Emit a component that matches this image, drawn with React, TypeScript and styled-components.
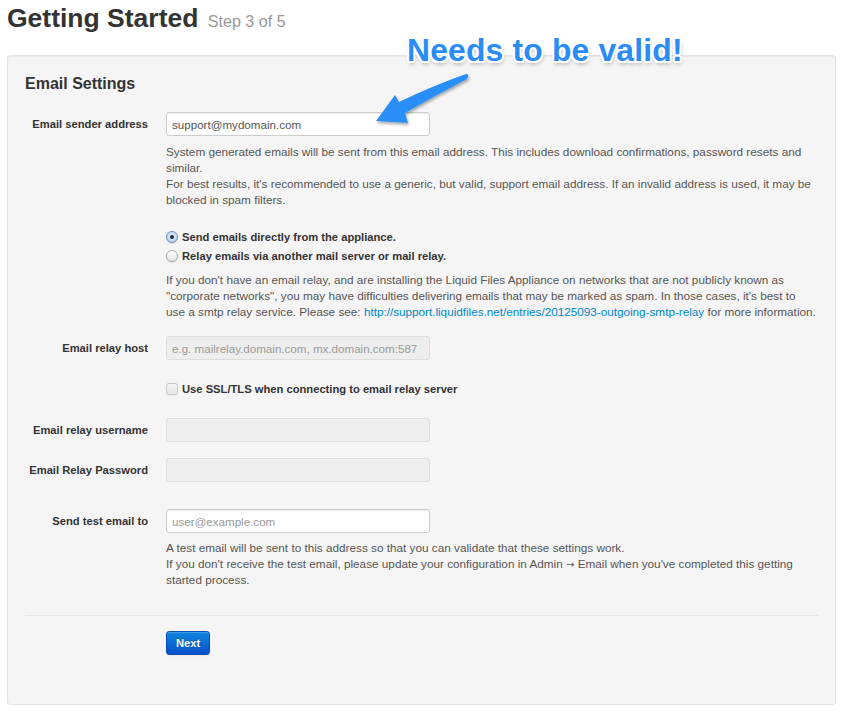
import React from "react";
import styled, { createGlobalStyle } from "styled-components";

const Global = createGlobalStyle`
  html, body { margin: 0; padding: 0; background: #ffffff; }
  body { font-family: "Liberation Sans", Arial, Helvetica, sans-serif; color: #333333; font-size: 11.2px; }
  * { box-sizing: border-box; }
`;

const Page = styled.div`
  position: relative;
  width: 850px;
  height: 715px;
  padding: 3px 14px 0 7px;
  overflow: hidden;
`;

const Title = styled.h1`
  margin: 0 0 22px 0;
  height: 30px;
  font-size: 26.5px;
  line-height: 30px;
  font-weight: 700;
  color: #333333;
  white-space: nowrap;
`;

const Small = styled.small`
  font-size: 16.1px;
  line-height: 1;
  font-weight: 400;
  color: #999999;
  margin-left: 2px;
`;

const Well = styled.div`
  background: #f5f5f5;
  border: 1px solid #e3e3e3;
  border-radius: 3px;
  box-shadow: inset 0 1px 1px rgba(0, 0, 0, 0.05);
  padding: 18px 17px 18px 17px;
  height: 650px;
`;

const Legend = styled.h3`
  margin: 0 0 18px 0;
  font-size: 16px;
  line-height: 20px;
  font-weight: 700;
  color: #333333;
`;

const Group = styled.div<{ $padTop?: number; $padBottom?: number }>`
  display: grid;
  grid-template-columns: 123px 1fr;
  column-gap: 18px;
  margin-bottom: 16px;
  padding-top: ${(p) => p.$padTop ?? 0}px;
  padding-bottom: ${(p) => p.$padBottom ?? 0}px;
`;

const Label = styled.label`
  grid-column: 1;
  text-align: right;
  font-weight: 700;
  font-size: 11.2px;
  line-height: 16px;
  padding-top: 4px;
  color: #333333;
  white-space: nowrap;
`;

const Controls = styled.div`
  grid-column: 2;
  display: flex;
  flex-direction: column;
  align-items: flex-start;
`;

const Input = styled.input`
  width: 264px;
  height: 24px;
  padding: 3px 5px;
  font-family: "Liberation Sans", Arial, Helvetica, sans-serif;
  font-size: 11.6px;
  line-height: 16px;
  color: #555555;
  background: #ffffff;
  border: 1px solid #cccccc;
  border-radius: 3px;
  box-shadow: inset 0 1px 1px rgba(0, 0, 0, 0.075);
  outline: none;
  &::placeholder { color: #9a9a9a; }
  &:disabled {
    background: #eeeeee;
    border-color: #dddddd;
    box-shadow: none;
  }
`;

const Help = styled.p<{ $top?: number }>`
  margin: ${(p) => p.$top ?? 8}px 0 0 0;
  font-size: 11.75px;
  line-height: 16px;
  color: #555555;
  width: 651px;
`;

const Link = styled.a`
  color: #0088cc;
  text-decoration: none;
  letter-spacing: -0.02px;
`;

const ArrowGlyph = styled.span`
  font-family: "DejaVu Sans", sans-serif;
  font-size: 10px;
  line-height: 0;
`;

const Choice = styled.label<{ $top?: number }>`
  display: flex;
  align-items: center;
  gap: 4px;
  margin-top: ${(p) => p.$top ?? 0}px;
  font-weight: 700;
  font-size: 11.2px;
  line-height: 16px;
  color: #333333;
  white-space: nowrap;
`;

const RadioMark = styled.span<{ $checked?: boolean }>`
  position: relative;
  width: 12px;
  height: 12px;
  border-radius: 50%;
  flex: none;
  border: 1px solid ${(p) => (p.$checked ? "#6f8fb3" : "#a9a9a9")};
  background: ${(p) =>
    p.$checked
      ? "radial-gradient(circle at 50% 40%, #e6f1fc 0%, #bcd6f2 70%, #9fc2ea 100%)"
      : "linear-gradient(#ffffff, #e2e2e2)"};
  box-shadow: 0 1px 1px rgba(0, 0, 0, 0.12);
  &::after {
    content: "";
    display: ${(p) => (p.$checked ? "block" : "none")};
    position: absolute;
    left: 3px;
    top: 3px;
    width: 4px;
    height: 4px;
    border-radius: 50%;
    background: #1f2a36;
  }
`;

const CheckMark = styled.span`
  width: 12px;
  height: 12px;
  flex: none;
  border-radius: 3px;
  border: 1px solid #c8c8c8;
  background: linear-gradient(#f6f6f6, #e6e6e6);
  box-shadow: 0 1px 1px rgba(0, 0, 0, 0.05);
`;

const Actions = styled.div`
  margin-top: 27px;
  border-top: 1px solid #e5e5e5;
  padding: 15px 0 15px 141px;
`;

const Button = styled.button`
  height: 24px;
  padding: 0 9px;
  font-family: "Liberation Sans", Arial, Helvetica, sans-serif;
  font-size: 11.2px;
  font-weight: 700;
  color: #ffffff;
  text-shadow: 0 -1px 0 rgba(0, 0, 0, 0.25);
  background: linear-gradient(#0f86e0, #0450c8);
  border: 1px solid #0a4fb3;
  border-radius: 3px;
  box-shadow: inset 0 1px 0 rgba(255, 255, 255, 0.2), 0 1px 2px rgba(0, 0, 0, 0.05);
  cursor: pointer;
`;

const Callout = styled.div`
  position: absolute;
  left: 407px;
  top: 31px;
  font-family: "Liberation Sans", Arial, Helvetica, sans-serif;
  font-size: 31.8px;
  line-height: 38px;
  font-weight: 700;
  letter-spacing: 0.2px;
  color: #2a8cf6;
  white-space: nowrap;
  text-shadow:
    -2px 0 0 #fff, 2px 0 0 #fff, 0 -2px 0 #fff, 0 2px 0 #fff,
    -1.5px -1.5px 0 #fff, 1.5px -1.5px 0 #fff, -1.5px 1.5px 0 #fff, 1.5px 1.5px 0 #fff,
    1px 3px 4px rgba(0, 0, 0, 0.35);
`;

const ArrowSvg = styled.svg`
  position: absolute;
  left: 360px;
  top: 60px;
  overflow: visible;
`;

export default function App() {
  return (
    <>
      <Global />
      <Page>
        <Title>
          Getting Started <Small>Step 3 of 5</Small>
        </Title>
        <Well>
          <Legend>Email Settings</Legend>

          <Group>
            <Label>Email sender address</Label>
            <Controls>
              <Input defaultValue="support@mydomain.com" />
              <Help>
                System generated emails will be sent from this email address. This includes download confirmations,
                password resets and similar.
                <br />
                For best results, it's recommended to use a generic, but valid, support email address. If an invalid
                address is used, it may be blocked in spam filters.
              </Help>
            </Controls>
          </Group>

          <Group $padTop={5}>
            <Controls>
              <Choice>
                <RadioMark $checked />
                Send emails directly from the appliance.
              </Choice>
              <Choice $top={3}>
                <RadioMark />
                Relay emails via another mail server or mail relay.
              </Choice>
              <Help>
                If you don't have an email relay, and are installing the Liquid Files Appliance on networks that are
                not publicly known as "corporate networks", you may have difficulties delivering emails that may be
                marked as spam. In those cases, it's best to use a smtp relay service. Please see:{" "}
                <Link href="#">http://support.liquidfiles.net/entries/20125093-outgoing-smtp-relay</Link> for more
                information.
              </Help>
            </Controls>
          </Group>

          <Group>
            <Label>Email relay host</Label>
            <Controls>
              <Input disabled placeholder="e.g. mailrelay.domain.com, mx.domain.com:587" />
            </Controls>
          </Group>

          <Group $padTop={5} $padBottom={5}>
            <Controls>
              <Choice>
                <CheckMark />
                Use SSL/TLS when connecting to email relay server
              </Choice>
            </Controls>
          </Group>

          <Group>
            <Label>Email relay username</Label>
            <Controls>
              <Input disabled />
            </Controls>
          </Group>

          <Group>
            <Label>Email Relay Password</Label>
            <Controls>
              <Input disabled type="password" />
            </Controls>
          </Group>

          <Group $padTop={11}>
            <Label>Send test email to</Label>
            <Controls>
              <Input placeholder="user@example.com" />
              <Help $top={7}>
                A test email will be sent to this address so that you can validate that these settings work.
                <br />
                If you don't receive the test email, please update your configuration in Admin{" "}
                <ArrowGlyph>→</ArrowGlyph> Email when you've completed this getting started process.
              </Help>
            </Controls>
          </Group>

          <Actions>
            <Button>Next</Button>
          </Actions>
        </Well>

        <Callout>Needs to be valid!</Callout>
        <ArrowSvg width="120" height="70" viewBox="0 0 120 70">
          <defs>
            <filter id="arrowShadow" x="-20%" y="-20%" width="150%" height="160%">
              <feDropShadow dx="1" dy="2" stdDeviation="1.5" floodColor="#000" floodOpacity="0.35" />
            </filter>
          </defs>
          <path
            d="M16 61 L35 35 L39 42 Q72 26 106 14 Q110 14 107 19 Q76 35 45 53 L48 63 Z"
            fill="#2a8ef8"
            filter="url(#arrowShadow)"
          />
        </ArrowSvg>
      </Page>
    </>
  );
}
